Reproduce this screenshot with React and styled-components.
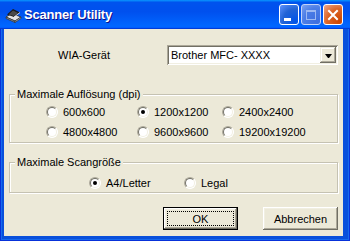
import styled, { createGlobalStyle } from "styled-components"

const resolutions = [
  ["600x600", "1200x1200", "2400x2400"],
  ["4800x4800", "9600x9600", "19200x19200"],
]

export default function App() {
  return (
    <>
      <GlobalStyle />
      <Window>
        <TitleBar>
          <AppIcon />
          <Title>Scanner Utility</Title>
          <Controls>
            <CaptionButton>
              <svg width="18" height="18" viewBox="0 0 18 18">
                <rect x="4" y="12" width="7" height="3" fill="#fff" />
              </svg>
            </CaptionButton>
            <CaptionButton $disabled>
              <svg width="18" height="18" viewBox="0 0 18 18">
                <rect x="4.5" y="4.5" width="9" height="9" fill="none" stroke="#9DB9F2" />
                <rect x="4" y="4" width="10" height="2" fill="#9DB9F2" />
              </svg>
            </CaptionButton>
            <CaptionButton $close>
              <svg width="18" height="18" viewBox="0 0 18 18">
                <path d="M5 5 L13 13 M13 5 L5 13" stroke="#fff" strokeWidth="2" strokeLinecap="square" />
              </svg>
            </CaptionButton>
          </Controls>
        </TitleBar>

        <Client>
          <DeviceRow>
            <DeviceLabel>WIA-Gerät</DeviceLabel>
            <Combo>
              <ComboText>Brother MFC- XXXX</ComboText>
              <DropButton>
                <Arrow />
              </DropButton>
            </Combo>
          </DeviceRow>

          <Group>
            <Legend>Maximale Auflösung (dpi)</Legend>
            <RadioGrid $cols="91px 85px auto" $left={36} $top={3}>
              {resolutions.flat().map((r) => (
                <Option key={r}>
                  <Radio $checked={r === "1200x1200"} />
                  {r}
                </Option>
              ))}
            </RadioGrid>
          </Group>

          <Group $gap>
            <Legend>Maximale Scangröße</Legend>
            <RadioGrid $cols="95px auto" $left={79} $top={6}>
              <Option>
                <Radio $checked />
                A4/Letter
              </Option>
              <Option>
                <Radio />
                Legal
              </Option>
            </RadioGrid>
          </Group>

          <ButtonRow>
            <PushButton $default>OK</PushButton>
            <PushButton>Abbrechen</PushButton>
          </ButtonRow>
        </Client>
      </Window>
    </>
  )
}

function AppIcon() {
  return (
    <IconBox>
      <svg width="17" height="16" viewBox="0 0 17 16">
        <path d="M1 10 L10 14 L16 10 L7 6.5 Z" fill="#E4E4E4" stroke="#2A2A2A" strokeWidth="0.8" />
        <path d="M1 10 L10 14 L10 15.5 L1 11.5 Z" fill="#8A8A8A" stroke="#2A2A2A" strokeWidth="0.6" />
        <path d="M10 14 L16 10 L16 11.5 L10 15.5 Z" fill="#B0B0B0" stroke="#2A2A2A" strokeWidth="0.6" />
        <path d="M2 7.5 L8 2 L15 5.5 L9 10 Z" fill="#1A1A1A" />
        <path d="M3.5 7.5 L8 3.5 L13 6 L9 9 Z" fill="#4A4A4A" />
        <path d="M9 10 L15 5.5" stroke="#fff" strokeWidth="0.8" />
      </svg>
    </IconBox>
  )
}

const GlobalStyle = createGlobalStyle`
  html, body {
    margin: 0;
    padding: 0;
    background: #ffffff;
  }
  body {
    font-family: "Liberation Sans", Arial, sans-serif;
    font-size: 11px;
    color: #000;
  }
`

const Window = styled.div`
  width: 350px;
  height: 241px;
  display: flex;
  flex-direction: column;
  background: #0850DC;
  box-shadow: inset 0 0 0 1px #0831D9, inset 0 0 0 2px #166AEE;
  overflow: hidden;
`

const TitleBar = styled.div`
  height: 29px;
  flex-shrink: 0;
  display: flex;
  align-items: center;
  padding: 0 7px 0 5px;
  background: linear-gradient(180deg, #0997ff, #0053ee 8%, #0050ee 40%, #06f 88%, #06f 93%, #005bff 95%, #003dd7 96%, #003dd7);
`

const IconBox = styled.div`
  width: 17px;
  height: 16px;
  display: flex;
  margin-right: 2px;
`

const Title = styled.div`
  flex: 1;
  font-family: "Liberation Sans", Arial, sans-serif;
  font-weight: bold;
  font-size: 13px;
  color: #fff;
  text-shadow: 1px 1px #0F1089;
  letter-spacing: -0.2px;
`

const Controls = styled.div`
  display: flex;
  gap: 2px;
`

const CaptionButton = styled.div`
  width: 20px;
  height: 21px;
  box-sizing: border-box;
  border: 1px solid ${(p) => (p.$disabled ? "#C2D3F8" : "#fff")};
  border-radius: 3px;
  display: flex;
  align-items: center;
  justify-content: center;
  background: ${(p) =>
    p.$close
      ? "radial-gradient(circle at 85% 85%, #CC4600 0%, #DC6527 55%, #F0A98F 100%)"
      : p.$disabled
      ? "radial-gradient(circle at 85% 85%, #3E6FE0 0%, #4B7DE6 60%, #7FA3F0 100%)"
      : "radial-gradient(circle at 85% 85%, #0054E9 0%, #2263D5 55%, #5F93FF 100%)"};
`

const Client = styled.div`
  flex: 1;
  margin: 0 7px 5px 4px;
  background: #ECE9D8;
  padding: 16px 5px 6px;
  display: flex;
  flex-direction: column;
`

const DeviceRow = styled.div`
  display: flex;
  align-items: center;
  gap: 8px;
`

const DeviceLabel = styled.div`
  width: 150px;
  text-align: center;
`

const Combo = styled.div`
  width: 171px;
  height: 20px;
  box-sizing: border-box;
  padding: 2px;
  display: flex;
  align-items: center;
  background: #fff;
  box-shadow: inset 1px 1px #ACA899, inset -1px -1px #fff, inset 2px 2px #716F64, inset -2px -2px #F1EFE2;
`

const ComboText = styled.div`
  flex: 1;
  padding-left: 2px;
  white-space: nowrap;
`

const DropButton = styled.div`
  width: 16px;
  height: 16px;
  display: flex;
  align-items: center;
  justify-content: center;
  background: #ECE9D8;
  box-shadow: inset -1px -1px #716F64, inset 1px 1px #F1EFE2, inset -2px -2px #ACA899, inset 2px 2px #fff;
`

const Arrow = styled.div`
  width: 1px;
  height: 0;
  border-left: 3px solid transparent;
  border-right: 3px solid transparent;
  border-top: 4px solid #000;
  margin-top: 1px;
`

const Group = styled.fieldset`
  margin: ${(p) => (p.$gap ? "13px" : "23px")} 0 0;
  padding: 0;
  min-width: 0;
  border: 1px solid #C5C2B2;
  box-shadow: 1px 1px #fff, inset 1px 1px #fff;
`

const Legend = styled.legend`
  margin-left: 5px;
  padding: 0 2px;
  line-height: 13px;
  background: #ECE9D8;
`

const RadioGrid = styled.div`
  display: grid;
  grid-template-columns: ${(p) => p.$cols};
  grid-auto-rows: 16px;
  row-gap: 4px;
  padding: ${(p) => p.$top}px 0 ${(p) => (p.$top > 4 ? 1 : 2)}px ${(p) => p.$left}px;
`

const Option = styled.label`
  display: flex;
  align-items: center;
  gap: 5px;
  white-space: nowrap;
`

const Radio = styled.span`
  position: relative;
  flex-shrink: 0;
  width: 12px;
  height: 12px;
  box-sizing: border-box;
  border-radius: 50%;
  border: 1px solid;
  border-color: #ACA899 #fff #fff #ACA899;
  background: #fff;

  &::before {
    content: "";
    position: absolute;
    inset: 0;
    border-radius: 50%;
    border: 1px solid;
    border-color: #716F64 #F1EFE2 #F1EFE2 #716F64;
  }

  &::after {
    content: "";
    display: ${(p) => (p.$checked ? "block" : "none")};
    position: absolute;
    left: 3px;
    top: 3px;
    width: 4px;
    height: 4px;
    border-radius: 50%;
    background: #000;
  }
`

const ButtonRow = styled.div`
  margin-top: auto;
  display: flex;
  justify-content: flex-end;
  gap: 25px;
`

const PushButton = styled.button`
  position: relative;
  width: 75px;
  height: 23px;
  padding: 0;
  border: none;
  font-family: "Liberation Sans", Arial, sans-serif;
  font-size: 11px;
  color: #000;
  background: #ECE9D8;
  box-shadow: ${(p) =>
    p.$default
      ? "inset 0 0 0 1px #000, inset -2px -2px #716F64, inset 2px 2px #fff, inset -3px -3px #ACA899, inset 3px 3px #F1EFE2"
      : "inset -1px -1px #716F64, inset 1px 1px #fff, inset -2px -2px #ACA899, inset 2px 2px #F1EFE2"};

  &::after {
    content: "";
    display: ${(p) => (p.$default ? "block" : "none")};
    position: absolute;
    inset: 4px;
    border: 1px dotted #000;
  }
`
